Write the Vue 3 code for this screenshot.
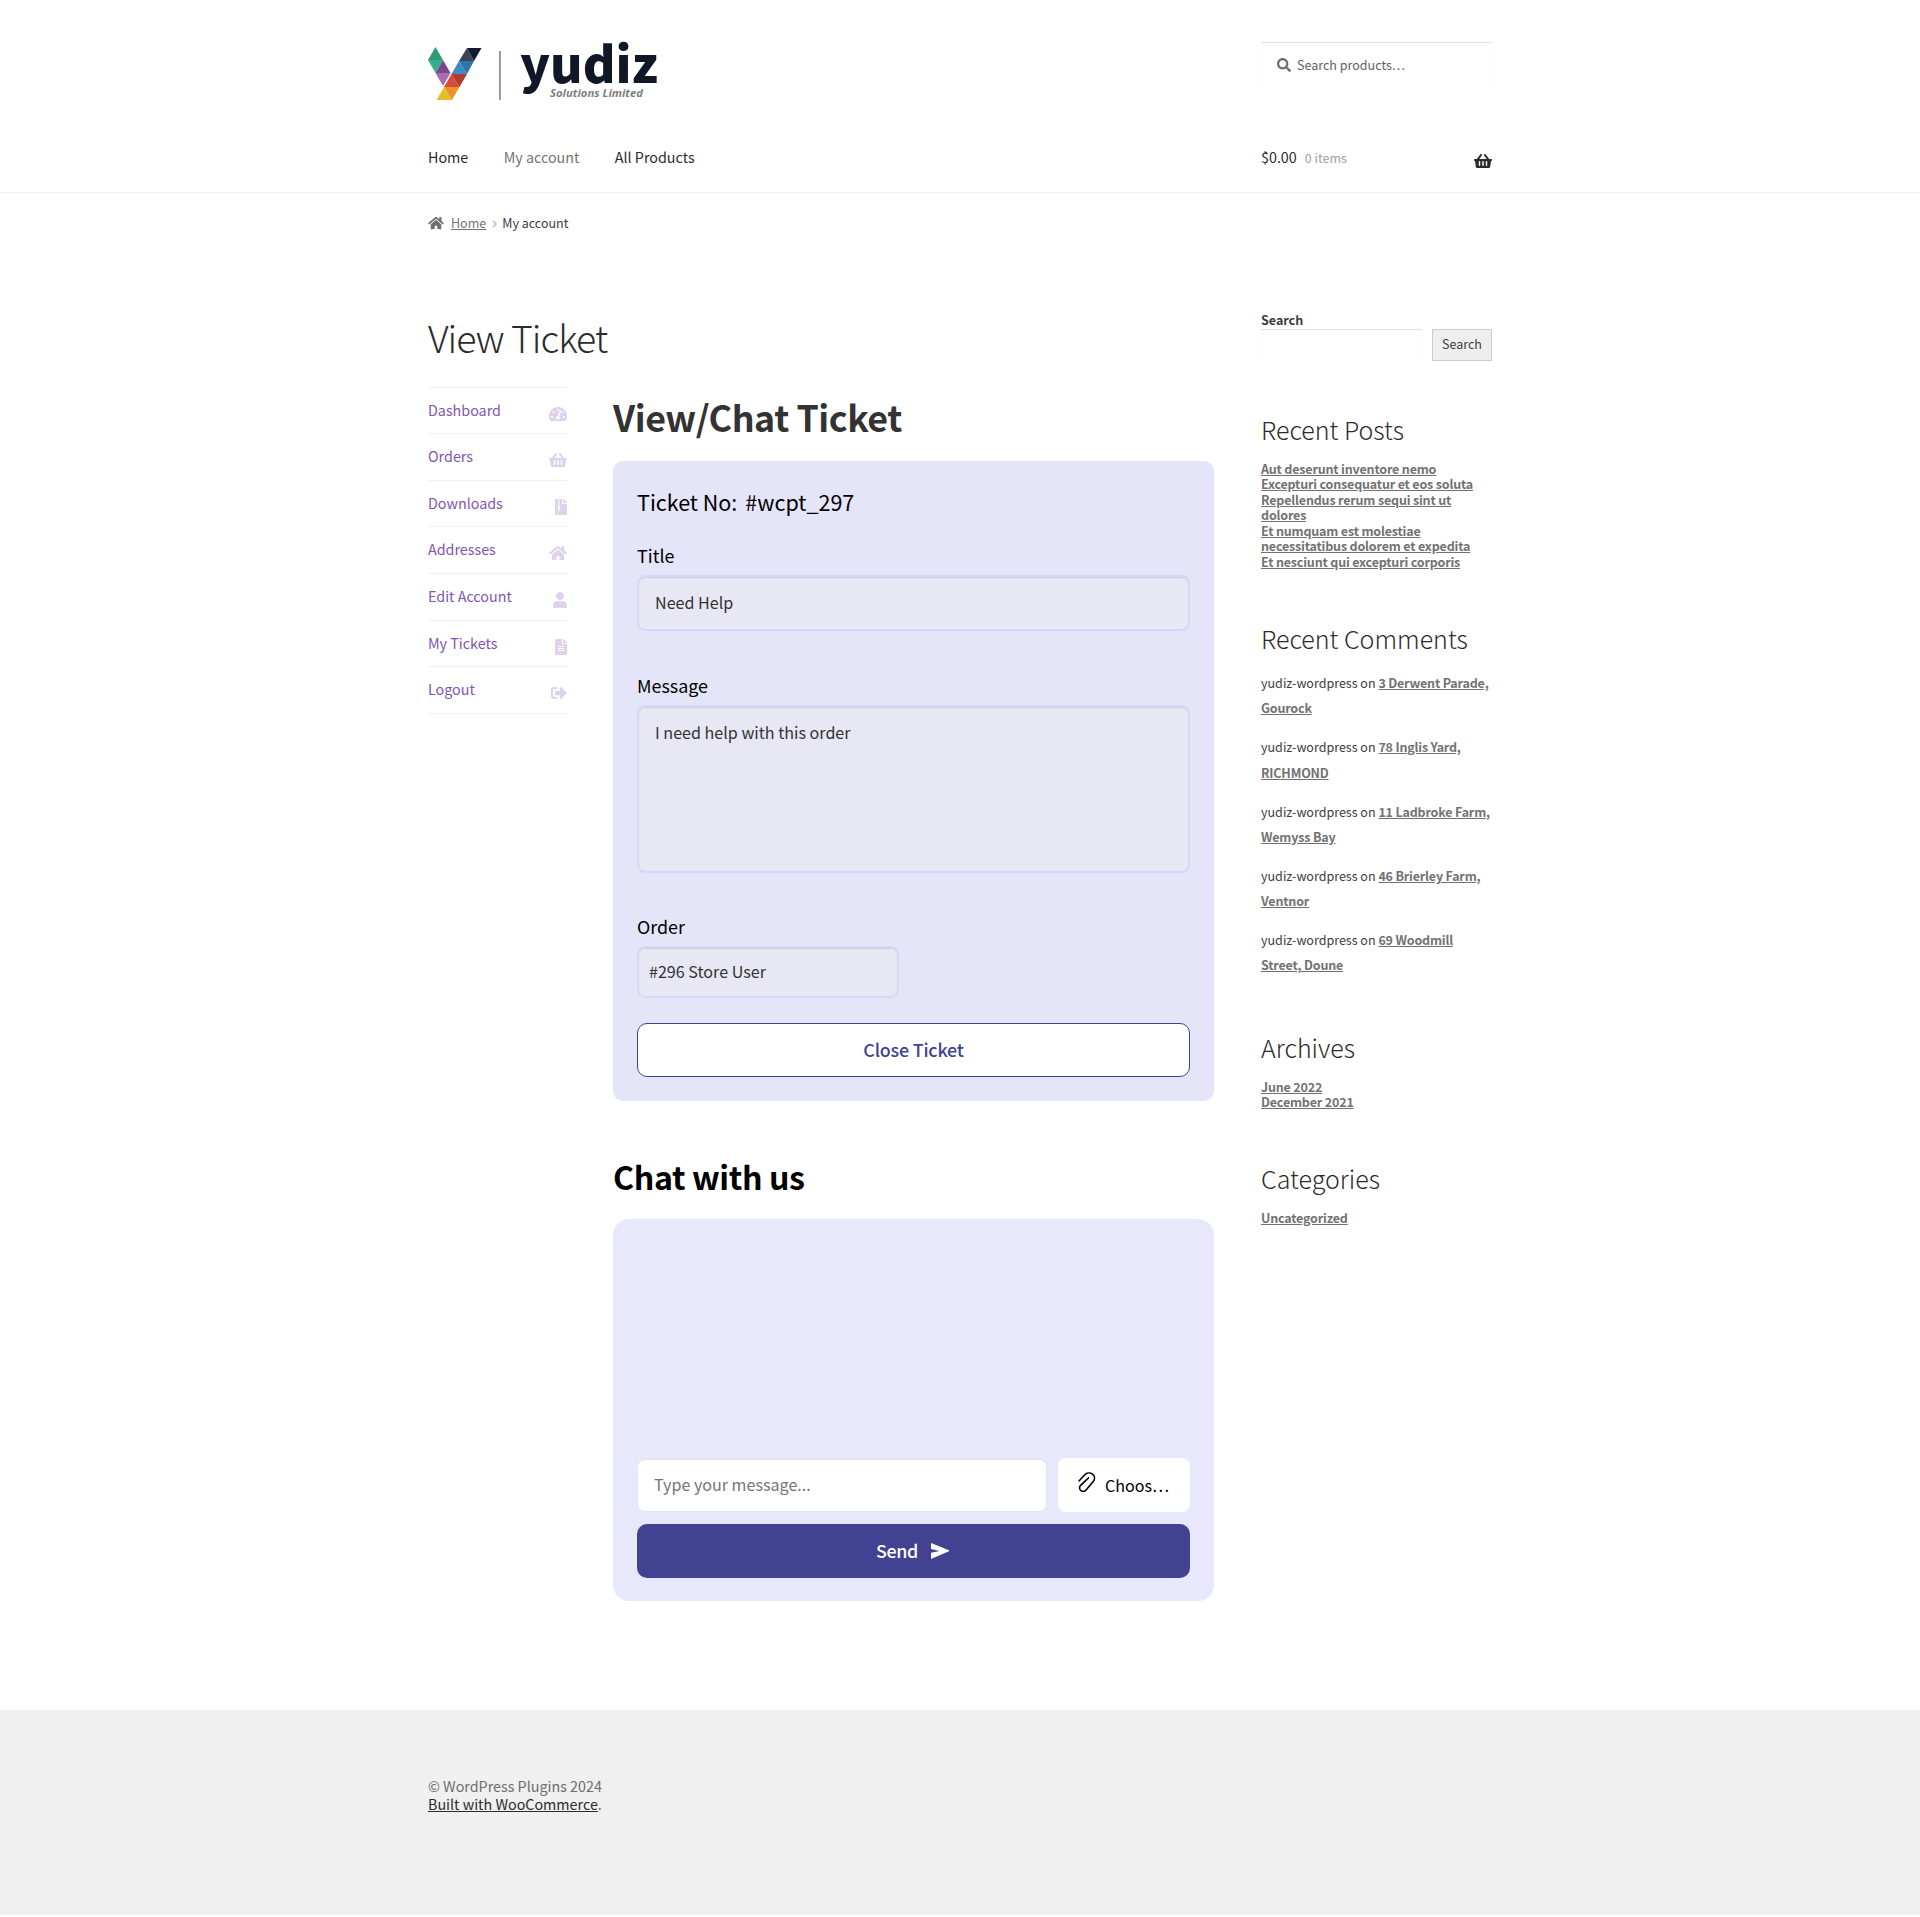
<script setup>
const icons = {
  search: { w: 512, d: 'M505 442.7L405.3 343c-4.5-4.5-10.6-7-17-7H372c27.6-35.3 44-79.7 44-128C416 93.1 322.9 0 208 0S0 93.1 0 208s93.1 208 208 208c48.3 0 92.7-16.4 128-44v16.3c0 6.4 2.5 12.5 7 17l99.7 99.7c9.4 9.4 24.6 9.4 33.9 0l28.3-28.3c9.4-9.4 9.4-24.6.1-34zM208 336c-70.7 0-128-57.2-128-128 0-70.7 57.2-128 128-128 70.7 0 128 57.2 128 128 0 70.7-57.2 128-128 128z' },
  home: { w: 576, d: 'M280.37 148.26L96 300.11V464a16 16 0 0 0 16 16l112.06-.29a16 16 0 0 0 15.92-16V368a16 16 0 0 1 16-16h64a16 16 0 0 1 16 16v95.64a16 16 0 0 0 16 16.05L464 480a16 16 0 0 0 16-16V300L295.67 148.26a12.19 12.19 0 0 0-15.3 0zM571.6 251.47L488 182.56V44.05a12 12 0 0 0-12-12h-56a12 12 0 0 0-12 12v72.61L318.47 43a48 48 0 0 0-61 0L4.34 251.47a12 12 0 0 0-1.6 16.9l25.5 31A12 12 0 0 0 45.15 301l235.22-193.74a12.19 12.19 0 0 1 15.3 0L530.9 301a12 12 0 0 0 16.9-1.6l25.5-31a12 12 0 0 0-1.7-16.93z' },
  basket: { w: 576, d: 'M576 216v16c0 13.255-10.745 24-24 24h-8l-26.113 182.788C514.509 462.435 494.257 480 470.37 480H105.63c-23.887 0-44.139-17.565-47.518-41.212L32 256h-8c-13.255 0-24-10.745-24-24v-16c0-13.255 10.745-24 24-24h67.341l106.78-146.821c10.395-14.292 30.407-17.453 44.701-7.058 14.293 10.395 17.453 30.408 7.058 44.701L170.477 192h235.046L326.12 82.821c-10.395-14.292-7.234-34.306 7.059-44.701 14.291-10.395 34.306-7.235 44.701 7.058L484.659 192H552c13.255 0 24 10.745 24 24zM312 392V280c0-13.255-10.745-24-24-24s-24 10.745-24 24v112c0 13.255 10.745 24 24 24s24-10.745 24-24zm112 0V280c0-13.255-10.745-24-24-24s-24 10.745-24 24v112c0 13.255 10.745 24 24 24s24-10.745 24-24zm-224 0V280c0-13.255-10.745-24-24-24s-24 10.745-24 24v112c0 13.255 10.745 24 24 24s24-10.745 24-24z' },
  gauge: { w: 576, d: 'M288 32C128.94 32 0 160.94 0 320c0 52.8 14.25 102.26 39.06 144.8 5.61 9.62 16.3 15.2 27.44 15.2h443c11.14 0 21.83-5.58 27.44-15.2C561.75 422.26 576 372.8 576 320c0-159.06-128.94-288-288-288zm0 64c14.71 0 26.58 10.13 30.32 23.65-1.11 2.26-2.64 4.23-3.45 6.67l-9.22 27.67c-5.13 3.49-10.97 6.01-17.64 6.01-17.67 0-32-14.33-32-32S270.33 96 288 96zM96 384c-17.67 0-32-14.33-32-32s14.33-32 32-32 32 14.33 32 32-14.33 32-32 32zm48-160c-17.67 0-32-14.33-32-32s14.33-32 32-32 32 14.33 32 32-14.33 32-32 32zm246.77-72.41l-61.33 184C343.13 347.33 352 364.54 352 384c0 11.72-3.38 22.55-8.88 32H232.88c-5.5-9.45-8.88-20.28-8.88-32 0-33.94 26.5-61.43 59.9-63.59l61.34-184.01c4.17-12.56 17.73-19.45 30.36-15.17 12.57 4.19 19.35 17.79 15.17 30.36zm14.66 57.2l15.52-46.55c3.47-1.29 7.13-2.23 11.05-2.23 17.67 0 32 14.33 32 32s-14.33 32-32 32c-11.38-.01-20.89-6.28-26.57-15.22zM480 384c-17.67 0-32-14.33-32-32s14.33-32 32-32 32 14.33 32 32-14.33 32-32 32z' },
  archive: { w: 384, d: 'M224 136V0H160v32h-32V0H24C10.7 0 0 10.7 0 24v464c0 13.3 10.7 24 24 24h336c13.3 0 24-10.7 24-24V160H248c-13.2 0-24-10.8-24-24zM128 32v32H96V32zM160 64v32h-32V64zM128 96v32H96V96zM160 128v32h-32v-32zM128 160v32H96v-32zM160 192v32h-32v-32zM108 224h40l22 106c6 34-14 54-42 54s-48-22-42-54zM128 310c-18 0-32 10-32 22s14 22 32 22 32-10 32-22-14-22-32-22zM384 121.900v6.100H256V0h6.100c6.400 0 12.500 2.500 17 7l97.900 98c4.500 4.500 7 10.600 7 16.900z' },
  user: { w: 448, d: 'M224 256c70.7 0 128-57.3 128-128S294.7 0 224 0 96 57.3 96 128s57.3 128 128 128zm89.6 32h-16.7c-22.2 10.2-46.9 16-72.9 16s-50.6-5.8-72.9-16h-16.7C60.2 288 0 348.2 0 422.4V464c0 26.5 21.5 48 48 48h352c26.5 0 48-21.5 48-48v-41.6c0-74.2-60.2-134.4-134.4-134.4z' },
  file: { w: 384, d: 'M224 136V0H24C10.7 0 0 10.7 0 24v464c0 13.3 10.7 24 24 24h336c13.3 0 24-10.7 24-24V160H248c-13.2 0-24-10.8-24-24zm64 236c0 6.6-5.4 12-12 12H108c-6.6 0-12-5.4-12-12v-8c0-6.6 5.4-12 12-12h168c6.6 0 12 5.4 12 12v8zm0-64c0 6.6-5.4 12-12 12H108c-6.6 0-12-5.4-12-12v-8c0-6.6 5.4-12 12-12h168c6.6 0 12 5.4 12 12v8zm0-72v8c0 6.6-5.4 12-12 12H108c-6.6 0-12-5.4-12-12v-8c0-6.6 5.4-12 12-12h168c6.6 0 12 5.4 12 12zm96-114.1v6.1H256V0h6.1c6.4 0 12.5 2.5 17 7l97.900 98c4.500 4.500 7 10.600 7 16.900z' },
  logout: { w: 512, d: 'M497 273L329 441c-15 15-41 4.5-41-17v-96H152c-13.3 0-24-10.7-24-24v-96c0-13.3 10.7-24 24-24h136V88c0-21.4 25.9-32 41-17l168 168c9.3 9.4 9.3 24.6 0 34zM192 436v-40c0-6.6-5.4-12-12-12H96c-17.7 0-32-14.3-32-32V160c0-17.700 14.300-32 32-32h84c6.600 0 12-5.400 12-12V76c0-6.600-5.400-12-12-12H96c-53 0-96 43-96 96v192c0 53 43 96 96 96h84c6.600 0 12-5.400 12-12z' },
}

const accountLinks = [
  ['Dashboard', icons.gauge],
  ['Orders', icons.basket],
  ['Downloads', icons.archive],
  ['Addresses', icons.home],
  ['Edit Account', icons.user],
  ['My Tickets', icons.file],
  ['Logout', icons.logout],
]
const posts = [
  'Aut deserunt inventore nemo',
  'Excepturi consequatur et eos soluta',
  'Repellendus rerum sequi sint ut dolores',
  'Et numquam est molestiae necessitatibus dolorem et expedita',
  'Et nesciunt qui excepturi corporis',
]
const comments = ['3 Derwent Parade, Gourock', '78 Inglis Yard, RICHMOND', '11 Ladbroke Farm, Wemyss Bay', '46 Brierley Farm, Ventnor', '69 Woodmill Street, Doune']
const archives = ['June 2022', 'December 2021']
</script>

<template>
  <div class="page">
    <header class="header">
      <div class="wrap">
        <div class="brand-row">
          <svg class="logo" width="232" height="62" viewBox="0 0 232 62">
            <path fill="#2d9b78" d="M7.500 7L15 20H0z" />
            <path fill="#36b08c" d="M0 20h15L7.500 33z" />
            <path fill="#7b478e" d="M15 20l7.500 13h-15z" />
            <path fill="#a470ab" d="M7.500 33h15L15 46z" />
            <path fill="#3b4357" d="M39 8l7 13H31z" />
            <path fill="#131a2b" d="M39 8h14.500L46 21z" />
            <path fill="#3d8cc4" d="M31 21l8 13H23.500z" />
            <path fill="#2d74a8" d="M31 21h15l-7 13z" />
            <path fill="#d84b3c" d="M23.500 34l8 13H16z" />
            <path fill="#b23a2f" d="M23.500 34H39l-7.500 13z" />
            <path fill="#e7bf28" d="M16 47l8 13H8.500z" />
            <path fill="#e8952d" d="M16 47h15.500L24 60z" />
            <path fill="#8c929b" d="M71 11h1.800v49H71z" />
            <text class="logo-name" x="92" y="42.500" textLength="138" lengthAdjust="spacingAndGlyphs">yudiz</text>
            <text class="logo-tag" x="122" y="57" textLength="93" lengthAdjust="spacingAndGlyphs">Solutions Limited</text>
          </svg>
          <div class="product-search">
            <svg width="14" height="14" viewBox="0 0 512 512"><path :d="icons.search.d" /></svg>
            <span>Search products…</span>
          </div>
        </div>
        <div class="nav-row">
          <nav class="main-nav">
            <a>Home</a><a class="current">My account</a><a>All Products</a>
          </nav>
          <div class="cart">
            <span>$0.00</span><small>0 items</small>
            <svg width="18" height="16" viewBox="0 0 576 512"><path :d="icons.basket.d" /></svg>
          </div>
        </div>
      </div>
    </header>

    <div class="wrap">
      <div class="breadcrumb">
        <svg width="16" height="14" viewBox="0 0 576 512"><path :d="icons.home.d" /></svg>
        <a>Home</a>
        <svg class="chevron" width="5" height="8" viewBox="0 0 5 8"><path d="M1 .8L4 4 1 7.200" /></svg>
        <span>My account</span>
      </div>

      <div class="columns">
        <main class="primary">
          <h1>View Ticket</h1>
          <div class="account">
            <ul class="account-nav">
              <li v-for="[label, icon] in accountLinks" :key="label">
                <a>{{ label }}</a>
                <svg :width="icon.w / 32" height="16" :viewBox="`0 0 ${icon.w} 512`"><path fill-rule="evenodd" :d="icon.d" /></svg>
              </li>
            </ul>

            <div class="content">
              <h2>View/Chat Ticket</h2>
              <section class="ticket">
                <div class="ticket-no"><span>Ticket No:</span><span>#wcpt_297</span></div>
                <div class="field">
                  <label>Title</label>
                  <div class="box title">Need Help</div>
                </div>
                <div class="field">
                  <label>Message</label>
                  <div class="box message">I need help with this order</div>
                </div>
                <div class="field">
                  <label>Order</label>
                  <div class="box order">#296 Store User</div>
                </div>
                <button class="close">Close Ticket</button>
              </section>

              <h3>Chat with us</h3>
              <section class="chat">
                <div class="compose">
                  <div class="message-input">Type your message...</div>
                  <div class="file-input">
                    <svg width="18" height="21" viewBox="0 0 18 21">
                      <path d="M1.200 8.800L6.800 2.800C8.800.7 12.200.4 14.500 2.200s2.600 4.900.9 7.100L8.300 17.800c-1.300 1.600-3.500 2.100-5.300.8s-1.900-3.300-.6-5L10.500 5.800" />
                    </svg>
                    <span>Choos…</span>
                  </div>
                </div>
                <button class="send">
                  <span>Send</span>
                  <svg width="18" height="16" viewBox="0 0 18 16"><path d="M0 0l18 7.200v1L0 16V9.800L8.500 8 0 6z" /></svg>
                </button>
              </section>
            </div>
          </div>
        </main>

        <aside class="sidebar">
          <div class="search-widget">
            <label>Search</label>
            <div class="search-form"><div class="search-field"></div><button>Search</button></div>
          </div>
          <div class="widget">
            <h4>Recent Posts</h4>
            <ul class="links"><li v-for="p in posts" :key="p"><a>{{ p }}</a></li></ul>
          </div>
          <div class="widget">
            <h4>Recent Comments</h4>
            <ul class="comments"><li v-for="c in comments" :key="c">yudiz-wordpress on <a>{{ c }}</a></li></ul>
          </div>
          <div class="widget">
            <h4>Archives</h4>
            <ul class="links"><li v-for="a in archives" :key="a"><a>{{ a }}</a></li></ul>
          </div>
          <div class="widget">
            <h4>Categories</h4>
            <ul class="links"><li><a>Uncategorized</a></li></ul>
          </div>
        </aside>
      </div>
    </div>

    <footer class="footer">
      <div class="wrap">
        <div>© WordPress Plugins 2024</div>
        <div><a>Built with WooCommerce</a>.</div>
      </div>
    </footer>
  </div>
</template>

<style>
body { margin: 0; background: #fff; }
</style>

<style scoped>
* { box-sizing: border-box; }
.page {
  height: 1917px;
  display: flex;
  flex-direction: column;
  font-family: "Noto Sans CJK SC", "Noto Sans", sans-serif;
  font-size: 14.32px;
  line-height: 24px;
  color: #3a3c42;
}
.wrap { width: 1064px; margin: 0 auto; }
svg { display: block; flex: none; fill: currentColor; }
ul { list-style: none; margin: 0; padding: 0; }
h1, h2, h3, h4 { margin: 0; }
button { font-family: inherit; padding: 0; }

.header { height: 193px; border-bottom: 1px solid #f0f0f0; flex: none; }
.brand-row { display: flex; justify-content: space-between; padding-top: 40px; height: 145px; }
.logo { overflow: visible; }
.logo-name { font-family: "Noto Sans CJK SC", sans-serif; font-weight: 900; font-size: 50px; fill: #101828; }
.logo-tag { font-family: "Open Sans", sans-serif; font-weight: 700; font-style: italic; font-size: 11.300px; fill: #808080; }
.product-search {
  display: flex;
  align-items: flex-start;
  width: 231px;
  height: 47px;
  margin-top: 2px;
  padding: 15px 0 0 16px;
  box-shadow: inset 0 1px 1px rgba(0, 0, 0, .125);
  font-size: 12.530px;
  line-height: 20px;
  color: #616161;
}
.product-search svg { margin: 1px 6px 0 0; color: #6d6d6d; }
.product-search span { margin-top: -2px; }
.nav-row { display: flex; justify-content: space-between; }
.main-nav { display: flex; gap: 35.400px; color: #2b2b2b; }
.main-nav .current { color: #737373; }
.cart { display: flex; width: 231px; color: #2b2b2b; }
.cart small { margin-left: 8px; font-size: 12.530px; line-height: 25px; color: #a0a0a0; }
.cart svg { margin: 8px 0 0 auto; }

.breadcrumb { display: flex; height: 20px; margin-top: 20px; font-size: 12.530px; line-height: 20px; }
.breadcrumb svg { margin-top: 3px; color: #6d6d6d; }
.breadcrumb a { margin-left: 7px; color: #727272; text-decoration: underline; }
.breadcrumb .chevron { margin: 7px 5px 0 6px; fill: none; stroke: #c8c8c8; stroke-width: 1.800; }

.columns { display: flex; justify-content: space-between; margin-top: 77px; }
.primary { width: 786px; margin-top: 2px; }
h1 { font-size: 37.500px; line-height: 50px; font-weight: 300; letter-spacing: -1px; color: #2b2b2b; }
.account { display: flex; justify-content: space-between; margin-top: 25px; }
.account-nav { width: 139px; margin-top: -.400px; border-top: 1px solid #f0f0f0; }
.account-nav li {
  display: flex;
  justify-content: space-between;
  height: 46.600px;
  padding-top: 10px;
  border-bottom: 1px solid #f0f0f0;
  color: #7f54b3;
}
.account-nav svg { margin-top: 8px; opacity: .25; }
.content { width: 601px; padding-top: 4px; }
h2 { font-size: 35.800px; line-height: 50px; font-weight: 700; letter-spacing: -.450px; color: #333; white-space: nowrap; }
.ticket { height: 640px; margin-top: 20px; padding: 26px 24px 24px; border-radius: 10px; background: #e5e5fa; color: #000; display: flex; flex-direction: column; }
.ticket-no { display: flex; gap: 8px; font-size: 21.500px; line-height: 30px; }
.field { margin-top: 42px; }
.field + .field + .field { margin-top: 41px; }
.ticket-no + .field { margin-top: 26px; }
.field label { display: block; font-size: 17.900px; line-height: 24px; }
.box {
  margin-top: 8px;
  padding: 14px 16px;
  border: 2px solid #d7d7fb;
  border-radius: 8px;
  background: #e8e8f4;
  box-shadow: inset 0 1px 1px rgba(0, 0, 0, .125);
  font-size: 16.100px;
  line-height: 22px;
  color: #333;
}
.title { height: 56px; }
.message { height: 168px; }
.order { width: 262px; height: 52px; padding: 12px 10px; }
.close { height: 54px; margin-top: auto; padding-bottom: 2px; border: 1px solid #424292; border-radius: 10px; background: #fff; color: #424292; font-size: 17.900px; font-weight: 500; letter-spacing: -.200px; }
h3 { margin-top: 53px; font-size: 32.200px; line-height: 44px; font-weight: 700; letter-spacing: -.400px; color: #000; }
.chat { height: 382px; margin-top: 21px; padding: 24px 24px 23px; border-radius: 16px; background: #e8e8fc; display: flex; flex-direction: column; justify-content: flex-end; gap: 12px; }
.compose { display: flex; gap: 11px; height: 54px; }
.message-input { flex: 1; padding: 13px 16px; border: 1px solid #e6e6e6; border-top-width: 2px; border-radius: 8px; background: #fff; font-size: 16.100px; line-height: 22px; color: #757575; }
.file-input { display: flex; width: 132px; padding: 14px 0 0 20px; border-radius: 8px; background: #fff; color: #000; font-size: 16.100px; line-height: 26px; }
.file-input svg { margin-right: 9px; fill: none; stroke: #000; stroke-width: 1.600; stroke-linecap: round; }
.send { display: flex; justify-content: center; align-items: center; gap: 13px; height: 54px; padding: 0 2px 0 0; border: 0; border-radius: 10px; background: #424292; color: #fff; font-size: 17.900px; font-weight: 500; letter-spacing: -.400px; }
.send span { margin-top: -2px; }

.sidebar { width: 231px; font-size: 12.530px; }
.search-widget label { display: block; height: 19px; line-height: 20px; font-weight: 700; }
.search-form { display: flex; gap: 10px; height: 32px; }
.search-field { flex: 1; box-shadow: inset 0 1px 1px rgba(0, 0, 0, .125); }
.search-form button { width: 60px; padding-bottom: 2px; border: 1px solid #ccc; background: #eee; color: #3a3c42; font-size: 12.530px; line-height: 20px; }
.widget { margin-top: 51.900px; }
.search-widget + .widget { margin-top: 51px; }
h4 { font-size: 25px; line-height: 34px; margin-bottom: 15px; font-weight: 300; color: #2b2b2b; }
.links { line-height: 15.450px; }
.sidebar a { font-weight: 700; color: #727272; text-decoration: underline; letter-spacing: -.180px; }
.comments { line-height: 25.200px; }
.comments li + li { margin-top: 13.900px; }

.footer { height: 205px; margin-top: auto; margin-bottom: 2px; padding-top: 67px; background: #f0f0f0; color: #6d6d6d; line-height: 18px; }
.footer a { color: #2b2b2b; text-decoration: underline; }
</style>
